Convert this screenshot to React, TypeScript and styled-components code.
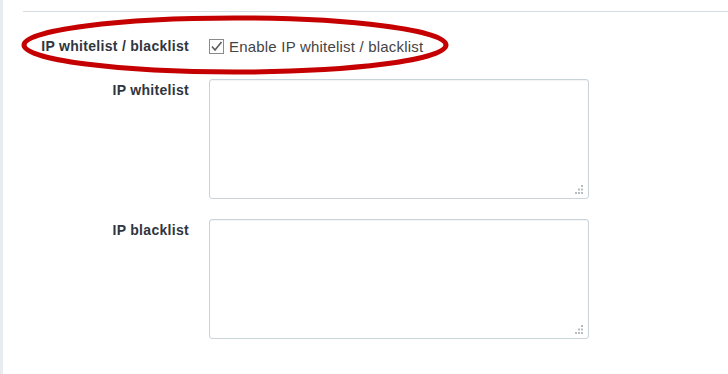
import styled, { createGlobalStyle } from "styled-components";

const GlobalStyle = createGlobalStyle`
  html, body {
    margin: 0;
    padding: 0;
    background: #fff;
  }
  body {
    font-family: "Liberation Sans", Arial, sans-serif;
  }
`;

const Page = styled.div`
  position: relative;
  min-height: 374px;
  border-left: 3px solid #e9ecee;
  padding-left: 20px;
  box-sizing: border-box;
  overflow: hidden;
`;

const Divider = styled.div`
  margin-top: 11px;
  height: 1px;
  background: #d6dce1;
`;

const Form = styled.div`
  margin-top: 25px;
  display: flex;
  flex-direction: column;
`;

const Row = styled.div<{ $gap: number }>`
  display: grid;
  grid-template-columns: 166px 380px;
  column-gap: 20px;
  align-items: start;
  margin-bottom: ${({ $gap }) => $gap}px;
`;

const Label = styled.div<{ $top?: number }>`
  text-align: right;
  font-size: 14px;
  font-weight: 700;
  letter-spacing: 0.3px;
  line-height: 18px;
  color: #2f3640;
  padding-top: ${({ $top }) => $top ?? 0}px;
`;

const CheckLabel = styled.label`
  display: flex;
  align-items: center;
  gap: 5px;
  height: 18px;
  font-size: 15px;
  letter-spacing: 0.2px;
  color: #444;
  cursor: pointer;
`;

const Box = styled.span`
  display: inline-flex;
  width: 15px;
  height: 15px;
  box-sizing: border-box;
  border: 1px solid #8a8a8a;
  background: #fdfdfd;
  align-items: center;
  justify-content: center;
`;

const AreaWrap = styled.div`
  position: relative;
  width: 380px;
  height: 120px;
`;

const Area = styled.textarea`
  width: 100%;
  height: 100%;
  box-sizing: border-box;
  border: 1px solid #c9d3da;
  border-radius: 3px;
  box-shadow: inset 0 1px 1px rgba(0, 0, 0, 0.05);
  background: #fff;
  resize: none;
  outline: none;
  font-family: inherit;
  font-size: 13px;
  padding: 4px 6px;
  display: block;
`;

const Grip = styled.svg`
  position: absolute;
  right: 6px;
  bottom: 5px;
  pointer-events: none;
`;

const Highlight = styled.svg`
  position: absolute;
  left: 0;
  top: 0;
  pointer-events: none;
`;

const ResizeGrip = () => (
  <Grip width="8" height="9" viewBox="0 0 8 9">
    {[
      [6, 0],
      [3, 3.5],
      [6, 3.5],
      [0, 7],
      [3, 7],
      [6, 7],
    ].map(([x, y]) => (
      <rect key={`${x}-${y}`} x={x} y={y} width="2" height="2" fill="#b7bcc0" />
    ))}
  </Grip>
);

export default function App() {
  return (
    <>
      <GlobalStyle />
      <Page>
        <Divider />
        <Form>
          <Row $gap={24}>
            <Label>IP whitelist / blacklist</Label>
            <CheckLabel>
              <Box>
                <svg width="13" height="13" viewBox="0 0 13 13">
                  <path d="M2 6.5 L5 10 L11.5 2" fill="none" stroke="#5c5c5c" strokeWidth="1.6" />
                </svg>
              </Box>
              Enable IP whitelist / blacklist
            </CheckLabel>
          </Row>
          <Row $gap={20}>
            <Label $top={2}>IP whitelist</Label>
            <AreaWrap>
              <Area />
              <ResizeGrip />
            </AreaWrap>
          </Row>
          <Row $gap={0}>
            <Label $top={2}>IP blacklist</Label>
            <AreaWrap>
              <Area />
              <ResizeGrip />
            </AreaWrap>
          </Row>
        </Form>
        <Highlight width="728" height="374" viewBox="0 0 728 374">
          <ellipse
            cx="235"
            cy="45"
            rx="211"
            ry="27"
            fill="none"
            stroke="#c50000"
            strokeWidth="5"
            transform="translate(-3 0)"
          />
        </Highlight>
      </Page>
    </>
  );
}
